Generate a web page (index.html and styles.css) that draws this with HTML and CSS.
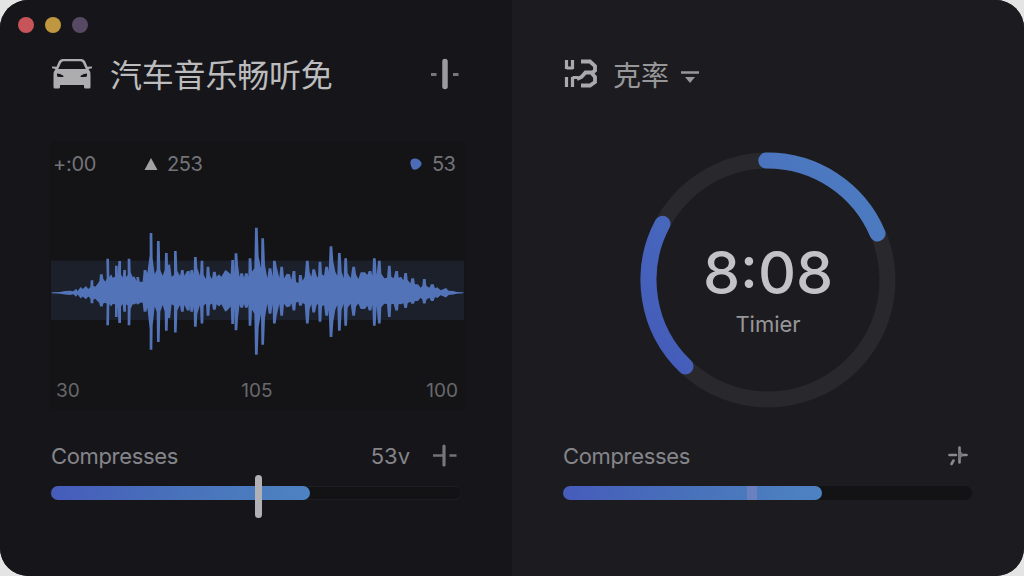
FILE: index.html
```html
<!DOCTYPE html>
<html lang="zh-CN">
<head>
<meta charset="utf-8">
<title>汽车音乐</title>
<link rel="stylesheet" href="styles.css">
</head>
<body>
<main class="window">
  <section class="panel panel-left">
    <div class="lights"><i class="light red"></i><i class="light amber"></i><i class="light violet"></i></div>
    <header class="head">
      <svg class="car" width="42" height="32" viewBox="0 0 42 32">
        <path fill="#adadb0" fill-rule="evenodd" d="M12 1H30Q33 1 34.500 4L36.500 8.800 41 8.500V10.200L37.500 11Q39.500 13 39.500 17V29Q39.500 30.500 38 30.500H34.500Q33 30.500 33 29V27H9V29Q9 30.500 7.500 30.500H4Q2.500 30.500 2.500 29V17Q2.500 13 4.500 11L1 10.200V8.500L5.500 8.800 7.500 4Q9 1 12 1ZM12.500 3.300Q10.800 3.300 10 5L7.200 11H34.800L32 5Q31.200 3.300 29.500 3.300ZM6 15.500V17.500Q6 19 8 19H12.500Q13 16.500 6 15.500ZM36 15.500V17.500Q36 19 34 19H29.500Q29 16.500 36 15.500Z"/>
      </svg>
      <h1 class="title">汽车音乐畅听免</h1>
      <svg class="adjust" width="28" height="32" viewBox="0 0 28 32">
        <path d="M14 3.500V28.500" stroke="#9b9b9e" stroke-width="5.500" stroke-linecap="round"/>
        <path d="M0 16.500H5.500M22 16.500H27.500" stroke="#77777a" stroke-width="3"/>
      </svg>
    </header>
    <div class="card">
      <div class="stats">
        <span class="offset">+:00</span>
        <svg class="tri" width="14" height="12" viewBox="0 0 14 12"><path d="M7 0 13.500 12H.5Z" fill="#a2a2a4"/></svg>
        <span class="count">253</span>
        <svg class="dot" width="12" height="12" viewBox="0 0 12 12"><path d="M3 .7Q8-.7 11 4 12.500 6 10 9 6 13 2.500 11 .5 8 .3 4.500.5 1.500 3 .7Z" fill="#4c6cb8"/></svg>
        <span class="level">53</span>
      </div>
      <div class="wave">
        <svg width="413" height="150" viewBox="33 0 1239 450">
          <rect class="band" x="33" y="137" width="1239" height="178"/>
          <path id="wave" class="wave-shape"/>
        </svg>
      </div>
      <div class="scale"><span>30</span><span>105</span><span class="last">100</span></div>
    </div>
    <div class="row">
      <span class="label">Compresses</span>
      <span class="value">53v</span>
      <svg width="24" height="24" viewBox="0 0 24 24">
        <path d="M11 2V21" stroke="#77777b" stroke-width="3.200" stroke-linecap="round"/>
        <path d="M0 11.500H10M16.500 11.500H23.500" stroke="#737377" stroke-width="2.500"/>
      </svg>
    </div>
    <div class="track track-left"><div class="fill"></div><i class="knob"></i></div>
  </section>
  <section class="panel panel-right">
    <header class="head">
      <svg class="mark" width="34" height="30" viewBox="0 0 34 30">
        <path fill="none" stroke="#aaaaac" stroke-width="3.200" d="M2.500 1V10M8.500 1V10M2.500 9H9M2.500 18V28M8.500 18V28M8.500 18.500H14"/>
        <path fill="none" stroke="#aaaaac" stroke-width="3.800" d="M17 2.500H26L31 7V11.500L28.500 13.500H21.500L17.500 18 13 20M28 14.500 31 18V23L26 26.500H17"/>
      </svg>
      <h2 class="mode">克率</h2>
      <svg class="drop" width="20" height="14" viewBox="0 0 20 14"><path d="M1 2.500H19" stroke="#97979a" stroke-width="2.500"/><path d="M5 7H15L10 13Z" fill="#97979a"/></svg>
    </header>
    <div class="dial">
      <svg width="256" height="256" viewBox="0 0 256 256">
        <defs><linearGradient id="arc" gradientUnits="userSpaceOnUse" x1="30" y1="220" x2="230" y2="60"><stop offset="0" stop-color="#445cba"/><stop offset="1" stop-color="#4c7ac0"/></linearGradient></defs>
        <circle class="ring" cx="128" cy="128" r="119.500"/>
        <path class="arc" d="M126.300 8.500A119.500 119.500 0 0 1 237.500 81.500"/>
        <path class="arc" d="M22.500 71.800A119.500 119.500 0 0 0 45.500 214.400"/>
      </svg>
      <div class="readout"><div class="time">8:08</div><div class="caption">Timier</div></div>
    </div>
    <div class="row">
      <span class="label">Compresses</span>
      <svg class="spark" width="20" height="20" viewBox="0 0 20 20">
        <path d="M11.500 1.500V16.500M1.500 9H8M12 9H18.500M5.500 14.500 3.500 18" fill="none" stroke="#8b8b8e" stroke-width="2.600" stroke-linecap="round"/>
        <path d="M11 3 15.500 9 11 14" fill="#77777a"/>
      </svg>
    </div>
    <div class="track track-right"><div class="fill"></div><i class="notch"></i></div>
  </section>
</main>
<script src="wave.js"></script>
</body>
</html>
```
FILE: styles.css
```css
* { box-sizing: border-box; }
body { margin: 0; background: #e4e4e5; font-family: Inter, "Noto Sans CJK SC", sans-serif; color: #77777b; }
.window { display: flex; width: 1024px; height: 576px; border-radius: 28px; overflow: hidden; background: #1c1c20; }
.panel { width: 512px; height: 576px; display: flex; flex-direction: column; }
.panel-left { background: #16161a; padding: 0 49px; }
.panel-right { background: #1c1c20; padding: 50px 51px 0; }

.lights { display: flex; gap: 11px; height: 50px; padding-top: 17px; margin-left: -31px; }
.light { width: 16px; height: 16px; border-radius: 50%; }
.red { background: #c65458; }
.amber { background: #bf9740; }
.violet { background: #574963; }

.head { display: flex; align-items: center; height: 50px; }
.car { margin: -2px 0 0 2px; }
.title { margin: -4px 0 0 17px; font: 400 32px/50px "Noto Sans CJK SC", sans-serif; letter-spacing: -0.200px; color: #bcbcbe; white-space: nowrap; }
.adjust { margin: -2px 4px 0 auto; }
.mark { margin: -2px 0 0 1px; }
.mode { margin: -2px 0 0 15px; font: 400 28px/50px "Noto Sans CJK SC", sans-serif; color: #97979a; }
.drop { margin: 4px 0 0 11px; }

.card { height: 269px; margin-top: 41px; border-radius: 8px; background: #141417; width: 417px; }
.stats { display: flex; align-items: center; height: 46px; padding: 0 11px 0 4px; font-size: 20px; }
.offset { width: 91px; letter-spacing: -0.300px; }
.offset, .count, .level { color: #737377; }
.tri { margin-top: -1px; }
.count { margin-left: 9px; letter-spacing: -0.400px; }
.dot { margin-left: auto; }
.level { margin-left: 10px; letter-spacing: -0.800px; }
.wave { height: 186px; padding: 28px 2px 0; }
.wave svg { display: block; }
.band { fill: #1b202b; }
.wave-shape { fill: #5273b8; }
.scale { display: grid; grid-template-columns: 1fr auto 1fr; padding: 5px 8px 0 7px; font-size: 19px; line-height: 26px; color: #68686c; }
.last { text-align: right; }

.row { display: flex; align-items: center; height: 32px; padding: 0 6px 0 2px; margin-top: 30px; font-size: 22px; }
.label { color: #85858a; letter-spacing: -0.350px; }
.value { margin: 0 23px 0 auto; color: #85858a; }
.track { position: relative; height: 14px; width: 411px; margin: 14px 0 0 1px; border-radius: 7px; background: #131316; }
.track-left { border: 1px solid #1e1e22; width: 412px; }
.fill { width: 259px; height: 14px; border-radius: 7px; background: linear-gradient(90deg, #465cbb 0%, #4870ba 45%, #4d83c2 100%); }
.track-left .fill { margin-top: -1px; }
.knob { position: absolute; left: 204px; top: -12px; width: 7px; height: 43px; border-radius: 4px; background: #b1b1b5; }

.dial { position: relative; width: 256px; height: 256px; margin: 52px 0 0 77px; }
.dial svg { display: block; }
.ring { fill: none; stroke: #29292d; stroke-width: 16px; }
.arc { fill: none; stroke: url(#arc); stroke-width: 16px; stroke-linecap: round; }
.readout { position: absolute; inset: 0; text-align: center; }
.time { margin-top: 85px; font-size: 59px; line-height: 72px; font-weight: 450; color: #c3c3c6; }
.caption { margin-top: 1px; font-size: 22px; line-height: 28px; color: #97979a; }
.panel-right .row { margin-top: 32px; padding: 0 5px 0 0; }
.panel-right .track { margin-left: 0; width: 409px; }
.spark { margin-left: auto; }
.notch { position: absolute; left: 184px; top: 0; width: 10px; height: 14px; background: #6b80bf; }
```
FILE: wave.js
```js
(() => {
  // Peaks of the waveform as x, y pairs; the midline is at y = 233.
  const peaks = `35,232 60,231 75,228 90,227 100,229 108,221 113,228 122,216 128,222 138,213 145,222 151,216 156,196 160,212 166,215 174,205 178,198 184,178 190,192 196,200 200,190 203,131 208,185 214,178 218,188 225,185 229,152 233,180 239,138 243,178 248,188 254,165 258,186 263,180 267,131 272,172 278,186 283,184 290,198 293,186 299,200 308,200 315,165 322,175 329,120 333,54 338,130 344,178 350,165 355,78 361,165 368,182 374,165 379,114 384,150 390,148 395,185 402,180 406,108 412,168 420,182 427,165 433,182 445,168 450,180 455,165 461,178 466,126 472,160 480,182 486,137 491,180 498,192 504,155 510,182 516,192 523,170 530,185 537,178 544,185 556,165 564,170 572,178 578,135 583,175 588,115 594,150 599,186 605,175 612,188 619,175 625,185 630,130 636,170 643,160 649,38 656,125 663,160 668,70 675,150 682,190 690,160 698,185 703,137 710,155 718,188 725,155 732,190 740,176 750,178 754,195 762,168 768,200 775,205 781,180 788,198 794,185 802,137 809,172 814,185 821,163 830,182 834,188 840,140 846,178 852,182 860,155 866,170 873,94 880,140 886,170 892,182 898,114 905,170 911,190 917,130 923,175 932,190 941,155 948,178 955,192 962,172 975,172 982,180 990,168 997,182 1003,130 1010,180 1018,137 1024,176 1033,190 1041,188 1048,152 1054,185 1061,190 1070,168 1076,188 1083,185 1090,196 1097,174 1103,195 1111,205 1118,190 1125,208 1134,208 1142,218 1147,212 1153,192 1159,212 1168,218 1177,208 1185,220 1192,217 1202,226 1218,219 1226,227 1240,228 1250,231 1270,232`
    .split(" ").map(p => p.split(",").map(Number)).map(([x, y]) => [x, 233 - y]);

  const outline = [];
  peaks.forEach(([x, a], i) => {
    const prev = peaks[i - 1] ? peaks[i - 1][1] : 0;
    const next = peaks[i + 1] ? peaks[i + 1][1] : 0;
    if (a > prev + 9 && a > next + 9) outline.push([x - 4, a], [x + 4, a]);
    else outline.push([x, a]);
  });

  // The lower half has a flatter body with the same tall spikes.
  const lower = a => {
    if (a < 30) return a * 0.95;
    if (a < 50) return 28.5 + (a - 30) * 0.3;
    if (a < 95) return 34.5 + (a - 50) * 1.2;
    return a * 0.95;
  };
  const upperEdge = outline.map(([x, a]) => `${x} ${233 - a}`);
  const lowerEdge = outline.map(([x, a]) => `${x} ${(234 + lower(a)).toFixed(1)}`).reverse();
  document.getElementById("wave").setAttribute("d", `M${upperEdge.join("L")}L${lowerEdge.join("L")}Z`);
})();
```
